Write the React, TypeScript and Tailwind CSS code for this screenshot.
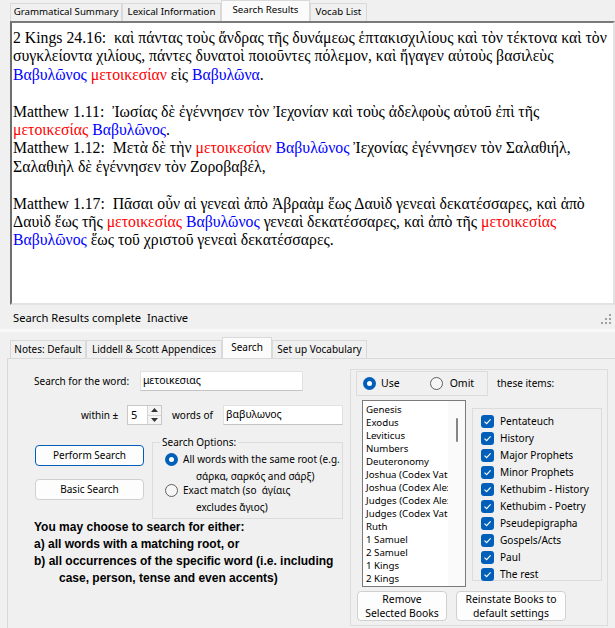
import type { ReactNode } from "react";

const ui = "font-['Noto_Sans',sans-serif] text-[10px]";
const serif = "font-['Liberation_Serif','DejaVu_Serif',serif]";

const R = ({ children }: { children: ReactNode }) => (
  <span className="text-[#ff0000]">{children}</span>
);
const B = ({ children }: { children: ReactNode }) => (
  <span className="text-[#0000ff]">{children}</span>
);

const Tab = ({
  label,
  className,
  active,
}: {
  label: string;
  className: string;
  active?: boolean;
}) => (
  <div
    className={`flex shrink-0 items-center justify-center whitespace-nowrap border border-b-0 border-[#d9d9d9] ${
      active ? "h-[21px] bg-[#fbfbfb] pb-[1px]" : "h-[18px] bg-[#f0f0f0]"
    } ${className}`}
  >
    {label}
  </div>
);

const Radio = ({ on }: { on?: boolean }) =>
  on ? (
    <span className="flex h-[13px] w-[13px] shrink-0 items-center justify-center rounded-full bg-[#005fb8]">
      <span className="h-[5px] w-[5px] rounded-full bg-white" />
    </span>
  ) : (
    <span className="h-[13px] w-[13px] shrink-0 rounded-full border border-[#5f5f5f] bg-[#f6f6f6]" />
  );

const Check = () => (
  <span className="flex h-[13px] w-[13px] shrink-0 items-center justify-center rounded-[3px] bg-[#005fb8]">
    <svg width="9" height="9" viewBox="0 0 9 9" fill="none">
      <path d="M1.5 4.6 L3.6 6.6 L7.6 2.4" stroke="white" strokeWidth="1.2" />
    </svg>
  </span>
);

const Btn = ({
  children,
  className,
  focused,
}: {
  children: ReactNode;
  className: string;
  focused?: boolean;
}) => (
  <div
    className={`flex shrink-0 items-center justify-center rounded-[4px] border bg-[#fdfdfd] text-center ${
      focused ? "border-[#005fb8]" : "border-[#d0d0d0]"
    } ${className}`}
  >
    {children}
  </div>
);

const books = [
  "Genesis",
  "Exodus",
  "Leviticus",
  "Numbers",
  "Deuteronomy",
  "Joshua (Codex Vaticanus)",
  "Joshua (Codex Alexandrinus)",
  "Judges (Codex Alexandrinus)",
  "Judges (Codex Vaticanus)",
  "Ruth",
  "1 Samuel",
  "2 Samuel",
  "1 Kings",
  "2 Kings",
];

const groups = [
  "Pentateuch",
  "History",
  "Major Prophets",
  "Minor Prophets",
  "Kethubim - History",
  "Kethubim - Poetry",
  "Pseudepigrapha",
  "Gospels/Acts",
  "Paul",
  "The rest",
];

export default function App() {
  return (
    <div className={`h-[628px] w-[615px] overflow-hidden bg-[#f0f0f0] text-black ${ui}`}>
      {/* top tabs */}
      <div className="flex h-[21px] items-end pl-[10px] text-[9.7px]">
        <Tab label="Grammatical Summary" className="w-[112px]" />
        <Tab label="Lexical Information" className="w-[99px]" />
        <Tab label="Search Results" className="w-[89px]" active />
        <Tab label="Vocab List" className="w-[57px]" />
      </div>

      {/* results */}
      <div
        className={`ml-[10px] h-[284px] w-[605px] overflow-hidden border-2 border-t-[#7a7a7a] border-l-[#6e6e6e] border-r-[#e3e3e3] border-b-[#e3e3e3] bg-white pl-[1px] pt-[6px] text-[15.75px] leading-[18.4px] whitespace-nowrap ${serif}`}
      >
        <div>2 Kings 24.16:&nbsp; καὶ πάντας τοὺς ἄνδρας τῆς δυνάμεως ἑπτακισχιλίους καὶ τὸν τέκτονα καὶ τὸν</div>
        <div>συγκλείοντα χιλίους, πάντες δυνατοὶ ποιοῦντες πόλεμον, καὶ ἤγαγεν αὐτοὺς βασιλεὺς</div>
        <div>
          <B>Βαβυλῶνος</B> <R>μετοικεσίαν</R> εἰς <B>Βαβυλῶνα</B>.
        </div>
        <div className="h-[18.4px]" />
        <div>Matthew 1.11:&nbsp; Ἰωσίας δὲ ἐγέννησεν τὸν Ἰεχονίαν καὶ τοὺς ἀδελφοὺς αὐτοῦ ἐπὶ τῆς</div>
        <div>
          <R>μετοικεσίας</R> <B>Βαβυλῶνος</B>.
        </div>
        <div>
          Matthew 1.12:&nbsp; Μετὰ δὲ τὴν <R>μετοικεσίαν</R> <B>Βαβυλῶνος</B> Ἰεχονίας ἐγέννησεν τὸν Σαλαθιήλ,
        </div>
        <div>Σαλαθιὴλ δὲ ἐγέννησεν τὸν Ζοροβαβέλ,</div>
        <div className="h-[18.4px]" />
        <div>Matthew 1.17:&nbsp; Πᾶσαι οὖν αἱ γενεαὶ ἀπὸ Ἀβραὰμ ἕως Δαυὶδ γενεαὶ δεκατέσσαρες, καὶ ἀπὸ</div>
        <div>
          Δαυὶδ ἕως τῆς <R>μετοικεσίας</R> <B>Βαβυλῶνος</B> γενεαὶ δεκατέσσαρες, καὶ ἀπὸ τῆς <R>μετοικεσίας</R>
        </div>
        <div>
          <B>Βαβυλῶνος</B> ἕως τοῦ χριστοῦ γενεαὶ δεκατέσσαρες.
        </div>
      </div>

      {/* status bar */}
      <div className="flex h-[24px] items-center justify-between pl-[13px] pr-[3px] pt-[3px] text-[11.2px] whitespace-pre">
        <span>Search Results complete  Inactive</span>
        <svg width="11" height="11" viewBox="0 0 11 11" className="mt-[2px]">
          <rect x="8" y="0" width="2" height="2" fill="#a0a0a0" />
          <rect x="4" y="4" width="2" height="2" fill="#a0a0a0" />
          <rect x="8" y="4" width="2" height="2" fill="#a0a0a0" />
          <rect x="0" y="8" width="2" height="2" fill="#a0a0a0" />
          <rect x="4" y="8" width="2" height="2" fill="#a0a0a0" />
          <rect x="8" y="8" width="2" height="2" fill="#a0a0a0" />
        </svg>
      </div>
      <div className="h-[3px] bg-[#f9f9f9]" />

      {/* bottom tabs */}
      <div className="mt-[5px] flex h-[21px] items-end pl-[10px]">
        <Tab label="Notes: Default" className="w-[76px]" />
        <Tab label="Liddell & Scott Appendices" className="w-[136px]" />
        <Tab label="Search" className="w-[50px]" active />
        <Tab label="Set up Vocabulary" className="w-[95px]" />
      </div>

      {/* search page */}
      <div className="ml-[7px] flex h-[270px] border-l border-t border-[#d9d9d9]">
        {/* left column */}
        <div className="w-[342px] shrink-0">
          <div className="mt-[12px] flex h-[20px] items-center pl-[26px]">
            <span className="w-[106px] shrink-0">Search for the word:</span>
            <div className="flex h-[20px] w-[163px] items-center border border-[#e2e2e2] border-b-[#c4c4c4] bg-white pl-[2px] text-[10.5px]">
              μετοικεσιας
            </div>
          </div>

          <div className="mt-[14px] flex h-[20px] items-center pl-[73px]">
            <span className="w-[46px] shrink-0">within ±</span>
            <div className="flex h-[20px] w-[35px] items-center border border-[#c8c8c8] bg-white pl-[3px] text-[11px]">
              <span className="flex-1">5</span>
              <div className="flex h-full w-[14px] flex-col border-l border-[#d4d4d4]">
                <div className="flex flex-1 items-center justify-center border-b border-[#d4d4d4] bg-[#f4f4f4]">
                  <svg width="7" height="4" viewBox="0 0 7 4">
                    <path d="M0 4 L3.5 0 L7 4 Z" fill="#333" />
                  </svg>
                </div>
                <div className="flex flex-1 items-center justify-center bg-[#f4f4f4]">
                  <svg width="7" height="4" viewBox="0 0 7 4">
                    <path d="M0 0 L3.5 4 L7 0 Z" fill="#333" />
                  </svg>
                </div>
              </div>
            </div>
            <span className="ml-[10px] w-[51px] shrink-0">words of</span>
            <div className="flex h-[20px] w-[120px] items-center border border-[#e2e2e2] border-b-[#c4c4c4] bg-white pl-[2px] text-[10.5px]">
              βαβυλωνος
            </div>
          </div>

          <div className="mt-[9px] flex">
            <div className="ml-[27px] flex w-[109px] flex-col pt-[11px]">
              <Btn className="h-[21px] w-[109px]" focused>
                Perform Search
              </Btn>
              <Btn className="mt-[13px] h-[21px] w-[109px]">Basic Search</Btn>
            </div>
            <fieldset className="ml-[8px] h-[85px] w-[191px] border border-[#dcdcdc] pl-[12px]">
              <legend className="ml-[-5px] px-[2px] leading-[16px]">Search Options:</legend>
              <div className="mt-[1px] flex h-[17px] items-center">
                <Radio on />
                <span className="ml-[5px] whitespace-nowrap">All words with the same root (e.g.</span>
              </div>
              <div className="flex h-[17px] items-center pl-[31px] whitespace-nowrap">σάρκα, σαρκός and σάρξ)</div>
              <div className="mt-[-3px] flex h-[17px] items-center">
                <Radio />
                <span className="ml-[5px] whitespace-pre">Exact match (so  άγίαις</span>
              </div>
              <div className="flex h-[17px] items-center pl-[31px] whitespace-nowrap">excludes ἄγιος)</div>
            </fieldset>
          </div>

          <div className="pl-[26px] font-['Liberation_Sans',sans-serif] text-[12px] font-bold leading-[17px] whitespace-nowrap">
            <div>You may choose to search for either:</div>
            <div>a) all words with a matching root, or</div>
            <div>b) all occurrences of the specific word (i.e. including</div>
            <div className="pl-[25px]">case, person, tense and even accents)</div>
          </div>
        </div>

        {/* right group */}
        <div className="mt-[10px] h-[257px] w-[258px] shrink-0 border border-[#dcdcdc]">
          <div className="mt-[1px] ml-[5px] flex items-center">
            <div className="flex h-[25px] w-[132px] items-center border border-[#dcdcdc] pl-[6px] text-[10.5px]">
              <Radio on />
              <span className="ml-[5px]">Use</span>
              <span className="ml-[30px]" />
              <Radio />
              <span className="ml-[7px]">Omit</span>
            </div>
            <span className="ml-[9px]">these items:</span>
          </div>

          <div className="mt-[4px] ml-[11px] flex items-start">
            <div className="flex h-[187px] w-[104px] shrink-0 border border-[#7a7a7a] bg-white text-[9.7px]">
              <div className="w-[85px] overflow-hidden pt-[2px] pl-[3px]">
                {books.map((b) => (
                  <div key={b} className="h-[13px] leading-[13px] whitespace-nowrap">
                    {b}
                  </div>
                ))}
              </div>
              <div className="flex flex-1 justify-center bg-[#fafafa] pt-[17px]">
                <div className="h-[24px] w-[2px] rounded-full bg-[#858585]" />
              </div>
            </div>
            <div className="mt-[8px] ml-[6px] h-[173px] w-[130px] shrink-0 border border-[#dcdcdc] pt-[4px] pl-[8px] text-[10.1px]">
              {groups.map((g) => (
                <div key={g} className="flex h-[17px] items-center whitespace-nowrap">
                  <Check />
                  <span className="ml-[6px]">{g}</span>
                </div>
              ))}
            </div>
          </div>

          <div className="mt-[4px] ml-[6px] flex text-[10.4px] leading-[14px]">
            <Btn className="h-[30px] w-[90px]">
              Remove
              <br />
              Selected Books
            </Btn>
            <Btn className="ml-[9px] h-[30px] w-[110px]">
              Reinstate Books to
              <br />
              default settings
            </Btn>
          </div>
        </div>
      </div>
    </div>
  );
}
